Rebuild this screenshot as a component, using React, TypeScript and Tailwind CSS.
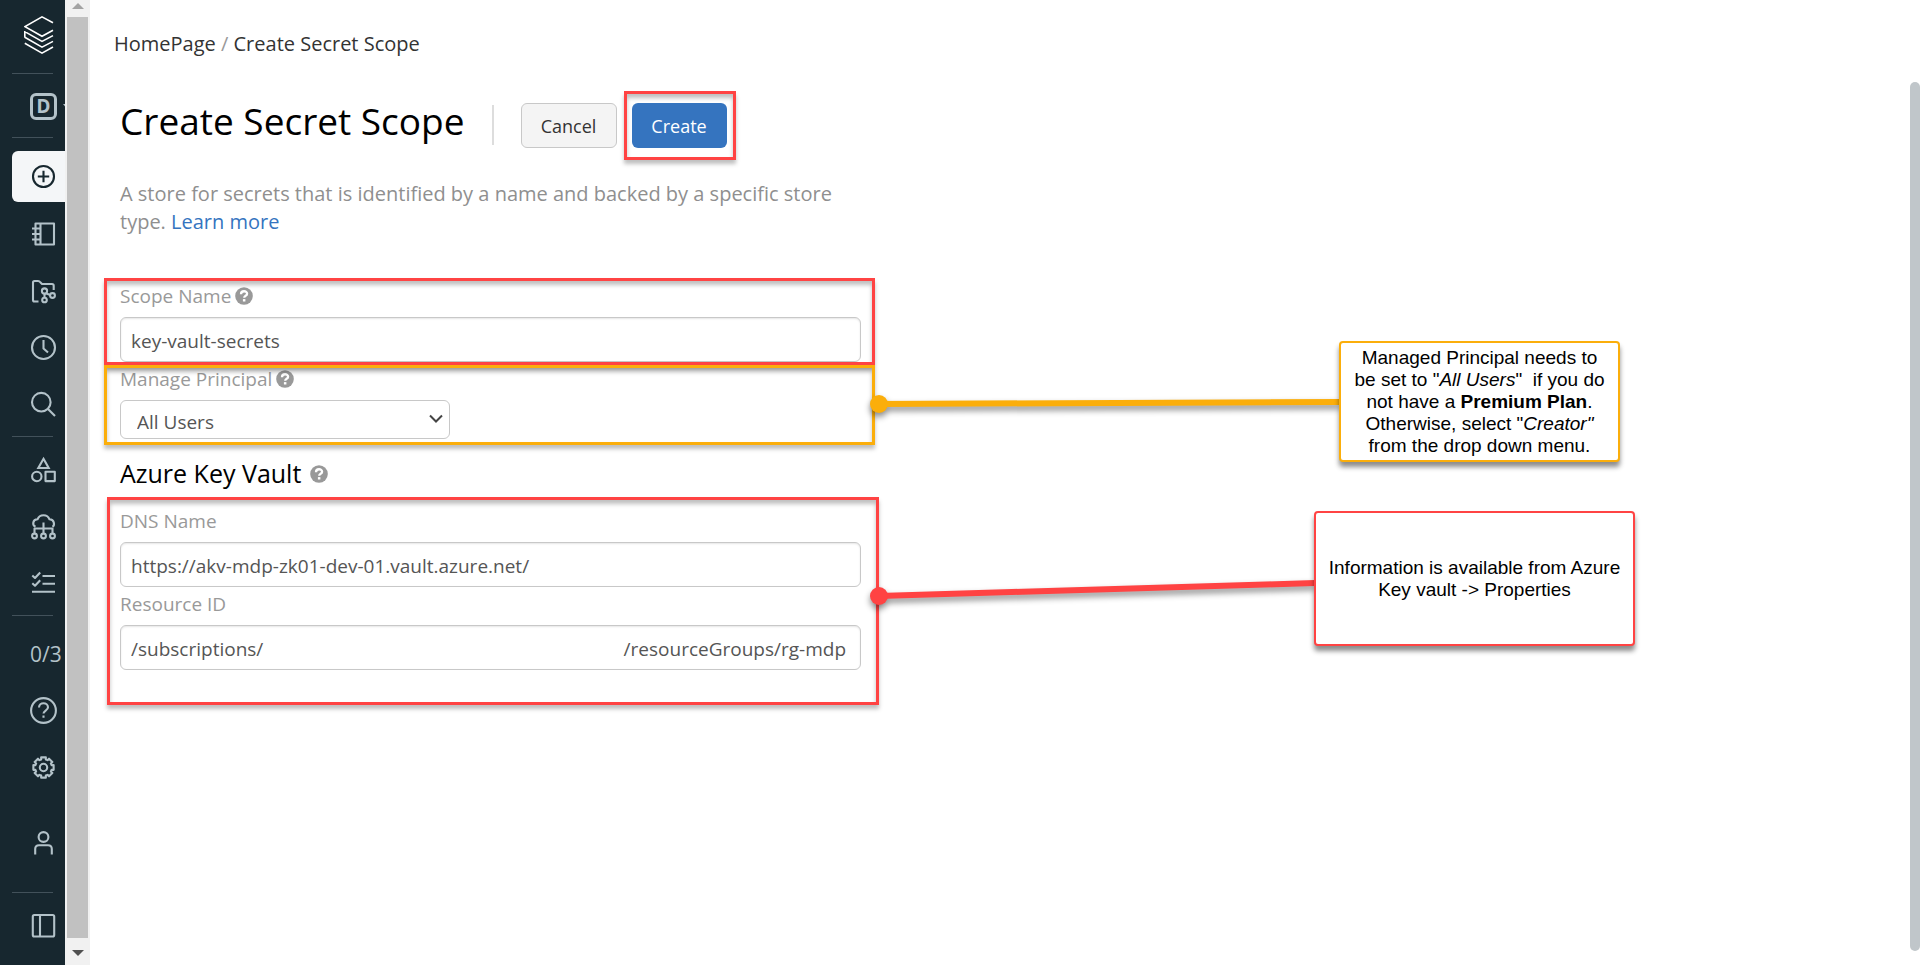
import type { ReactNode } from "react";
import { useState } from "react";

const gearPath = (() => {
  const teeth = 8;
  const points: string[] = [];
  for (let i = 0; i < teeth; i++) {
    const base = (i * 360) / teeth;
    const steps: [number, number][] = [
      [-13, 10.4],
      [13, 10.4],
      [16, 8.4],
      [29, 8.4],
    ];
    for (const [offset, radius] of steps) {
      const angle = ((base + offset) * Math.PI) / 180;
      const x = (13.5 + radius * Math.sin(angle)).toFixed(2);
      const y = (13.5 - radius * Math.cos(angle)).toFixed(2);
      points.push(`${x} ${y}`);
    }
  }
  return `M${points.join("L")}Z`;
})();

function Icon({ children }: { children: ReactNode }) {
  return (
    <svg
      width="28"
      height="28"
      viewBox="0 0 28 28"
      fill="none"
      stroke="currentColor"
      strokeWidth="2.1"
      strokeLinejoin="round"
      aria-hidden="true"
    >
      {children}
    </svg>
  );
}

function NavItem({ label, active, children }: { label: string; active?: boolean; children: ReactNode }) {
  return (
    <div className="flex h-[57px] items-center pl-3">
      <a
        href="#"
        aria-label={label}
        className={
          active
            ? "flex h-[51px] w-full items-center rounded-l-md bg-[#f4f6f8] pl-[18px] text-[#17272f]"
            : "flex h-[51px] w-full items-center pl-[18px] text-[#b3c2c9]"
        }
      >
        {children}
      </a>
    </div>
  );
}

function Separator({ className }: { className: string }) {
  return <div className={`ml-3 mr-3 h-px shrink-0 bg-[#42515a] ${className}`} />;
}

function Sidebar() {
  return (
    <nav className="flex w-[65px] shrink-0 flex-col overflow-hidden bg-[#17272f]">
      <a href="#" aria-label="Databricks" className="ml-6 mt-[15px] text-white">
        <svg width="30" height="40" viewBox="0 0 30 40" fill="none" stroke="currentColor" strokeWidth="1.6" aria-hidden="true">
          <path d="M29 7.8 18 1.8 1 11.6l17 9.7 11-6" />
          <path d="M.8 16.6 18 26.4l11-5.800M.8 16v6.600M.8 22.200 18 32.200l11-5.800M.8 28.200 18 38.200l11-6.200" />
        </svg>
      </a>
      <Separator className="mt-[18px]" />
      <div className="mt-[19px] ml-[30px] flex items-center gap-[6px]">
        <button
          type="button"
          aria-label="Workspace persona"
          className="flex h-[27px] w-[27px] shrink-0 items-center justify-center rounded-md border-[3px] border-[#b3c2c9] font-['Noto_Sans',sans-serif] text-[19px] leading-none font-bold text-[#b3c2c9]"
        >
          D
        </button>
        <svg width="10" height="6" viewBox="0 0 10 6" fill="#b3c2c9" className="shrink-0" aria-hidden="true">
          <path d="M0 0h10L5 6z" />
        </svg>
      </div>
      <Separator className="mt-[17px]" />
      <div className="mt-[10px]">
        <NavItem label="Create" active>
          <Icon>
            <circle cx="13.5" cy="13.5" r="10.5" />
            <path d="M7.800 13.500h11.400M13.500 7.800v11.400" />
          </Icon>
        </NavItem>
        <NavItem label="Workspace">
          <Icon>
            <path d="M5.500 3.500H24v21H5.500zM10.500 3.500v21" />
            <path d="M2 8.500h8.500M2 14h8.500M2 19.500h8.500" />
          </Icon>
        </NavItem>
        <NavItem label="Repos">
          <Icon>
            <path d="M8.500 24.500H4.500Q3 24.500 3 23V5.500Q3 4 4.500 4H8q1.500 0 2.500 1.500L12 7h10q1.700 0 1.700 1.700V13" />
            <circle cx="14.500" cy="14" r="2.600" />
            <circle cx="14.500" cy="23" r="2.300" />
            <circle cx="22.500" cy="18.500" r="2.400" />
            <path d="M14.500 16.600v4M15.800 16.300l4.400 1.600" />
          </Icon>
        </NavItem>
        <NavItem label="Recents">
          <Icon>
            <circle cx="13.500" cy="13.500" r="11.500" />
            <path d="M13.500 6V14.500l4.500 4" />
          </Icon>
        </NavItem>
        <NavItem label="Search">
          <Icon>
            <circle cx="11.300" cy="11.200" r="9.300" />
            <path d="M18 18l7 7" />
          </Icon>
        </NavItem>
      </div>
      <Separator className="mt-[3px]" />
      <div className="mt-[4px]">
        <NavItem label="Data">
          <Icon>
            <path d="M13.500 2.800 18.700 12H8.300z" strokeLinejoin="miter" />
            <circle cx="6.800" cy="20.500" r="4.700" />
            <path d="M15.500 15.800h9.300v9.300h-9.300z" />
          </Icon>
        </NavItem>
        <NavItem label="Compute">
          <Icon>
            <path d="M5.500 13.800C2 12 2.500 6.500 7.500 6.300 9.500.8 17.500.8 19.500 6.300 24.500 6.500 25 12 22.500 13.800" />
            <path d="M13.500 9.500v11M4.500 20.500v-5h18v5" />
            <circle cx="4.500" cy="23" r="2.400" />
            <circle cx="13.500" cy="23" r="2.400" />
            <circle cx="22.500" cy="23" r="2.400" />
          </Icon>
        </NavItem>
        <NavItem label="Workflows">
          <Icon>
            <path d="M2.300 5.500l2.700 2.500 5.200-5.500M2.300 13.200l2.700 2.500 5.200-5.500M12.500 6h12.500M12.500 13.800h12.500M2 21.800h23" />
          </Icon>
        </NavItem>
      </div>
      <Separator className="mt-[3px]" />
      <div className="mt-[9px]">
        <NavItem label="Tasks completed">
          <span className="pt-[3px] text-[21px] font-medium whitespace-nowrap">0/3</span>
        </NavItem>
        <NavItem label="Help">
          <Icon>
            <circle cx="13.500" cy="13.500" r="12.400" />
            <path d="M9 10.600c0-6 9-5.600 9-.400 0 3.300-4.500 3.300-4.500 6.300M13.500 18.400v2.400" />
          </Icon>
        </NavItem>
        <NavItem label="Settings">
          <Icon>
            <path d={gearPath} />
            <circle cx="13.500" cy="13.500" r="3.700" />
          </Icon>
        </NavItem>
      </div>
      <div className="mt-[18px]">
        <NavItem label="Account">
          <Icon>
            <circle cx="13.500" cy="8" r="4.900" />
            <path d="M5.200 25.500V20q0-3.800 3.800-3.800h9q3.800 0 3.800 3.800v5.500" />
          </Icon>
        </NavItem>
      </div>
      <Separator className="mt-[21px]" />
      <div className="mt-[4px]">
        <NavItem label="Toggle sidebar">
          <Icon>
            <rect x="2.800" y="3" width="21.400" height="21.500" rx="1.500" />
            <path d="M10 3v21.500" />
          </Icon>
        </NavItem>
      </div>
    </nav>
  );
}

function SidebarScrollbar() {
  return (
    <div className="flex w-[25px] shrink-0 flex-col items-center bg-[#f1f1f1]" aria-hidden="true">
      <div className="flex h-[17px] items-center pb-[6px]">
        <div className="border-x-[6px] border-b-[6px] border-x-transparent border-b-[#a3a3a3]" />
      </div>
      <div className="w-[21px] flex-1 bg-[#c1c1c1]" />
      <div className="flex h-[27px] items-center pt-[3px]">
        <div className="border-x-[6px] border-t-[6px] border-x-transparent border-t-[#505050]" />
      </div>
    </div>
  );
}

function HelpBadge() {
  return (
    <svg width="18" height="18" viewBox="0 0 18 18" className="shrink-0" aria-hidden="true">
      <circle cx="9" cy="9" r="8.800" fill="#999" />
      <path d="M6 7.200c0-4 6.100-3.700 6.100-.500 0 2.200-2.900 2-2.900 4.100" fill="none" stroke="#fff" strokeWidth="2.300" />
      <path d="M7.900 12.100h2.500v2.400H7.900z" fill="#fff" />
    </svg>
  );
}

/* Rectangular marker drawn over a group of controls. */
function Highlight({ className }: { className: string }) {
  return (
    <div
      className={`pointer-events-none absolute border-[3px] shadow-[0_4px_4px_rgba(0,0,0,0.25),inset_0_4px_4px_rgba(0,0,0,0.25)] ${className}`}
    />
  );
}

const labelClass = "flex h-7 items-center gap-1 pb-[2px] text-[19px] text-[#999]";
const inputClass =
  "h-[45px] w-full rounded-md border border-[#c8c8c8] bg-white px-[10px] pt-[2px] text-[19px] text-[#555] shadow-[inset_0_1px_2px_rgba(0,0,0,0.1)] outline-none";

export default function App() {
  const [scope, setScope] = useState("key-vault-secrets");
  const [dns, setDns] = useState("https://akv-mdp-zk01-dev-01.vault.azure.net/");
  const [resource, setResource] = useState(`/subscriptions/${" ".repeat(73)}/resourceGroups/rg-mdp`);

  return (
    <div className="flex min-h-screen bg-white font-['Open_Sans','Noto_Sans',sans-serif]">
      <Sidebar />
      <SidebarScrollbar />
      <main className="relative flex-1 pl-[30px]">
        <nav aria-label="Breadcrumb" className="-ml-[6px] pt-[30px] text-[20px] leading-7 text-[#333]">
          <a href="#">HomePage</a> <span className="text-[#999]">/</span> <span>Create Secret Scope</span>
        </nav>

        <form className="w-[741px]" onSubmit={(e) => e.preventDefault()}>
          <div className="mt-[45px] flex h-[45px] items-center">
            <h1 className="-mt-[10px] text-[37px] leading-none whitespace-nowrap text-black">Create Secret Scope</h1>
            <div className="-mt-[2px] ml-[27px] h-10 w-[2px] bg-[#ddd]" />
            <button
              type="button"
              className="ml-[27px] h-[45px] w-24 rounded-md border border-[#c8c8c8] bg-[#f4f4f4] pt-[2px] text-[18px] text-[#333]"
            >
              Cancel
            </button>
            <div className="relative ml-[15px]">
              <button type="submit" className="h-[45px] w-[95px] rounded-md bg-[#3574bf] pt-[2px] text-[18px] text-white">
                Create
              </button>
              <Highlight className="-top-3 -right-[9px] -bottom-3 -left-2 border-[#ff4343]" />
            </div>
          </div>

          <p className="mt-8 text-[20px] leading-7 text-[#8f8f8f]">
            A store for secrets that is identified by a name and backed by a specific store type.{" "}
            <a href="#" className="inline-block text-[#3574bf]">
              Learn more
            </a>
          </p>

          <div className="relative mt-[47px]">
            <label htmlFor="scope" className={labelClass}>
              Scope Name <HelpBadge />
            </label>
            <input id="scope" className={`mt-[6px] ${inputClass}`} value={scope} onChange={(e) => setScope(e.target.value)} />
            <Highlight className="-top-[5px] -right-[14px] -bottom-[3px] -left-4 border-[#ff4343]" />
          </div>

          <div className="relative mt-1">
            <label htmlFor="principal" className={labelClass}>
              Manage Principal <HelpBadge />
            </label>
            <div className="relative mt-[6px] w-[330px]">
              <select
                id="principal"
                defaultValue="All Users"
                className="h-[39px] w-full appearance-none rounded-md border border-[#c8c8c8] bg-white pt-[6px] pl-4 text-[19px] text-[#555] outline-none"
              >
                <option>All Users</option>
                <option>Creator</option>
              </select>
              <svg className="pointer-events-none absolute top-[14px] right-[7px]" width="14" height="10" viewBox="0 0 14 10" fill="none" aria-hidden="true">
                <path d="M1 1.500l6 6 6-6" stroke="#444" strokeWidth="2" />
              </svg>
            </div>
            <Highlight className="-top-px -right-[14px] -bottom-[6px] -left-4 border-[#fbae0b]" />
          </div>

          <h2 className="mt-[17px] flex h-9 items-center gap-[9px] text-[25px] text-black">
            Azure Key Vault <HelpBadge />
          </h2>

          <div className="relative mt-4">
            <label htmlFor="dns" className={labelClass}>
              DNS Name
            </label>
            <input id="dns" className={`mt-[6px] ${inputClass}`} value={dns} onChange={(e) => setDns(e.target.value)} />
            <label htmlFor="resource" className={`mt-1 ${labelClass}`}>
              Resource ID
            </label>
            <input
              id="resource"
              className={`mt-[6px] ${inputClass}`}
              value={resource}
              onChange={(e) => setResource(e.target.value)}
            />
            <Highlight className="-top-[11px] -right-[18px] -bottom-[35px] -left-[13px] border-[#ff4343]" />
          </div>
        </form>

        <svg
          className="pointer-events-none absolute top-[380px] left-[770px] drop-shadow-[0_4px_3px_rgba(0,0,0,0.45)]"
          width="490"
          height="240"
          viewBox="0 0 490 240"
          aria-hidden="true"
        >
          <path d="M19 24l461-2" stroke="#fbae0b" strokeWidth="6" />
          <circle cx="19" cy="24" r="9" fill="#fbae0b" />
          <path d="M19 216l436-13" stroke="#ff4343" strokeWidth="6" />
          <circle cx="19" cy="216" r="9" fill="#ff4343" />
        </svg>

        <aside className="absolute top-[341px] left-[1249px] flex h-[121px] w-[281px] items-center justify-center rounded-[4px] border-2 border-[#fbae0b] bg-white text-center font-['Liberation_Sans',Arial,sans-serif] text-[19px] leading-[22px] whitespace-nowrap text-black shadow-[0_5px_5px_rgba(0,0,0,0.45)]">
          <p>
            Managed Principal needs to
            <br />
            be set to "<em>All Users</em>"&nbsp; if you do
            <br />
            not have a <strong>Premium Plan</strong>.
            <br />
            Otherwise, select "<em>Creator"</em>
            <br />
            from the drop down menu.
          </p>
        </aside>

        <aside className="absolute top-[511px] left-[1224px] flex h-[135px] w-[321px] items-center justify-center rounded-[4px] border-2 border-[#ff4343] bg-white text-center font-['Liberation_Sans',Arial,sans-serif] text-[19px] leading-[22px] whitespace-nowrap text-black shadow-[0_5px_5px_rgba(0,0,0,0.45)]">
          <p>
            Information is available from Azure
            <br />
            Key vault -&gt; Properties
          </p>
        </aside>

        <div className="absolute top-[82px] right-0 bottom-[14px] w-[10px] rounded-[5px] bg-[#c0c6ca]" aria-hidden="true" />
      </main>
    </div>
  );
}
